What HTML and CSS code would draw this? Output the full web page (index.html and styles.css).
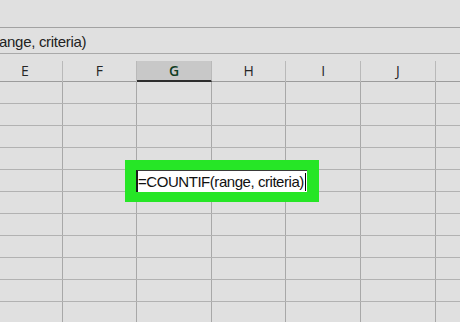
FILE: index.html
```html
<!DOCTYPE html>
<html lang="en">
<head>
  <meta charset="UTF-8" />
  <title>COUNTIF</title>
  <link rel="stylesheet" href="styles.css">
</head>
<body>
  <div class="ribbon-gap"></div>

  <div class="formula-bar">
    <span class="formula-text">ange, criteria)</span>
  </div>

  <div class="sheet">
    <div class="headers">
      <div class="col-head">E</div>
      <div class="col-head">F</div>
      <div class="col-head active">G</div>
      <div class="col-head">H</div>
      <div class="col-head">I</div>
      <div class="col-head">J</div>
      <div class="col-head"></div>
    </div>

    <div class="grid" id="grid"></div>

    <div class="highlight">
      <div class="cell-edit">=COUNTIF(range, criteria)<span class="caret"></span></div>
    </div>
  </div>

  <script>
    const grid = document.getElementById("grid");
    for (let r = 0; r < 11; r++) {
      const row = document.createElement("div");
      row.className = "row";
      for (let c = 0; c < 7; c++) {
        const cell = document.createElement("div");
        cell.className = "cell";
        row.appendChild(cell);
      }
      grid.appendChild(row);
    }
  </script>
</body>
</html>
```

FILE: styles.css
```css
body {
  margin: 0;
  width: 460px;
  height: 322px;
  overflow: hidden;
  background-color: #e0e0e0;
  font-family: 'Open Sans', 'Liberation Sans', sans-serif;
  color: #222;
}

.ribbon-gap {
  height: 27px;
  border-bottom: 1px solid #a2a2a2;
}

.formula-bar {
  height: 25px;
  border-bottom: 1px solid #a9a9a9;
  display: flex;
  align-items: center;
}

.formula-text {
  font-family: 'Liberation Sans', sans-serif;
  font-size: 15px;
  letter-spacing: -0.3px;
  margin-left: -1px;
  margin-top: 1px;
}

.sheet {
  position: relative;
  margin-top: 7px;
  width: 460px;
  height: 262px;
  overflow: hidden;
}

.headers,
.row {
  display: grid;
  grid-template-columns: repeat(7, 74.6px);
  margin-left: -12px;
}

.headers {
  height: 20px;
  border-bottom: 1px solid #9c9c9c;
}

.col-head {
  border-right: 1px solid #b9b9b9;
  font-size: 14px;
  text-align: center;
  line-height: 20px;
  color: #262626;
}

.col-head.active {
  background-color: #c8c8c8;
  border-bottom: 2px solid #2e2e2e;
  color: #0f3d22;
  font-weight: 600;
  height: 19px;
  line-height: 19px;
}

.row {
  height: 21px;
  border-bottom: 1px solid #b2b2b2;
}

.cell {
  border-right: 1px solid #a8a8a8;
}

.highlight {
  position: absolute;
  left: 125px;
  top: 99px;
  width: 194px;
  height: 42px;
  background-color: #26e626;
  box-sizing: border-box;
  padding: 10px 12px 10px 11px;
}

.cell-edit {
  height: 22px;
  background-color: #fff;
  box-sizing: border-box;
  border-left: 2px solid #1a1a1a;
  border-top: 1px solid #3a3a3a;
  font-family: 'Liberation Sans', sans-serif;
  font-size: 15px;
  letter-spacing: -0.45px;
  line-height: 20px;
  color: #111;
  white-space: nowrap;
  overflow: hidden;
  display: flex;
  align-items: center;
}

.caret {
  display: inline-block;
  width: 1px;
  height: 18px;
  background-color: #000;
  margin-left: 1px;
}
```
